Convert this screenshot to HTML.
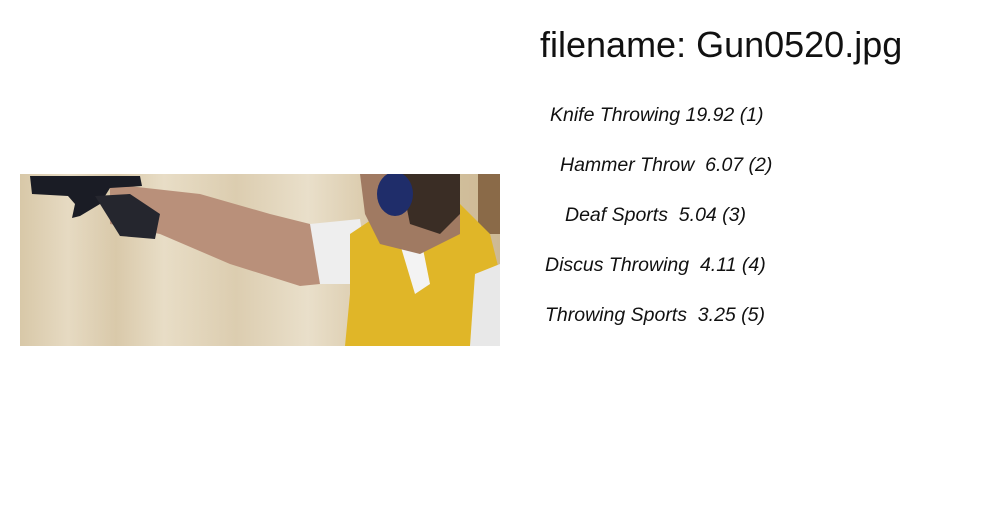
<!DOCTYPE html>
<html><head><meta charset="utf-8"><style>
html,body{margin:0;padding:0;background:#fff;width:1000px;height:520px;overflow:hidden;position:relative;font-family:"Liberation Sans",sans-serif;color:#111}
.t{position:absolute;left:540px;top:24px;font-size:36px;white-space:nowrap}
.i{position:absolute;font-style:italic;font-size:19.5px;white-space:nowrap}
svg{position:absolute;left:20px;top:174px}
</style></head><body>
<svg width="480" height="172" viewBox="0 0 480 172">
<defs>
<linearGradient id="w" x1="0" x2="1" y1="0" y2="0">
<stop offset="0" stop-color="#d8c8a8"/><stop offset="0.1" stop-color="#e6dac2"/><stop offset="0.2" stop-color="#d9c9aa"/><stop offset="0.3" stop-color="#e8ddc6"/><stop offset="0.45" stop-color="#dccdb0"/><stop offset="0.6" stop-color="#e9dfca"/><stop offset="0.75" stop-color="#d8c7a6"/><stop offset="1" stop-color="#cdb995"/>
</linearGradient>
</defs>
<rect width="480" height="172" fill="url(#w)"/>
<rect x="458" y="0" width="22" height="60" fill="#8a6a48"/>
<path d="M90 10 L180 20 L250 40 L290 50 L300 60 L300 110 L280 112 L210 90 L140 60 L90 50 Z" fill="#b9907a"/>
<path d="M290 50 L340 45 L350 110 L300 110 Z" fill="#eeeeee"/>
<path d="M330 60 L360 40 L440 30 L470 60 L480 100 L480 172 L325 172 L330 120 Z" fill="#e0b628"/>
<path d="M380 70 L400 60 L410 110 L395 120 Z" fill="#f3f3f3"/>
<path d="M455 100 L480 90 L480 172 L450 172 Z" fill="#e8e8e8"/>
<path d="M340 0 L440 0 L440 60 L400 80 L360 70 L345 40 Z" fill="#a07a62"/>
<path d="M380 0 L440 0 L440 40 L420 60 L390 50 Z" fill="#3a2d25"/>
<ellipse cx="375" cy="20" rx="18" ry="22" fill="#1f2d6a"/>
<path d="M10 2 L120 2 L122 12 L90 14 L80 30 L60 42 L52 44 L55 30 L48 22 L12 20 Z" fill="#1a1c25"/>
<path d="M75 22 L110 20 L140 40 L135 65 L100 62 Z" fill="#25262e"/>
</svg>
<div class="t">filename: Gun0520.jpg</div>
<div class="i" style="left:550px;top:104px">Knife Throwing 19.92 (1)</div>
<div class="i" style="left:560px;top:154px">Hammer Throw&nbsp; 6.07 (2)</div>
<div class="i" style="left:565px;top:204px">Deaf Sports&nbsp; 5.04 (3)</div>
<div class="i" style="left:545px;top:254px">Discus Throwing&nbsp; 4.11 (4)</div>
<div class="i" style="left:545px;top:304px">Throwing Sports&nbsp; 3.25 (5)</div>
</body></html>
